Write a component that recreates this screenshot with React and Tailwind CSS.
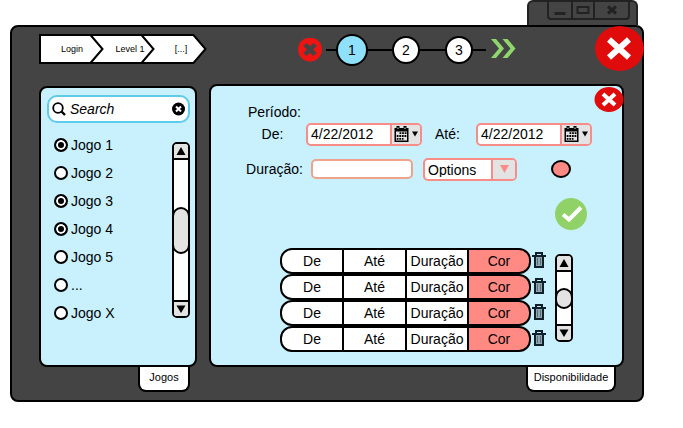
import React from "react";

const games = [
  { name: "Jogo 1", checked: true },
  { name: "Jogo 2", checked: false },
  { name: "Jogo 3", checked: true },
  { name: "Jogo 4", checked: true },
  { name: "Jogo 5", checked: false },
  { name: "...", checked: false },
  { name: "Jogo X", checked: false },
];

const rows = [1, 2, 3, 4];

function WindowControls() {
  return (
    <div className="mr-[6px] h-[25px] w-[111px] rounded-t-md border-2 border-b-0 border-[#222] bg-[#444]">
      <div className="ml-[18px] flex h-[18px] w-[83px] rounded-b border-x-2 border-b-2 border-[#222]">
        <button aria-label="Minimizar" className="flex w-6 items-end justify-center border-r-2 border-[#222]">
          <svg width="12" height="6" viewBox="0 0 12 6">
            <path d="M0.500 1.500H11.500" stroke="#222" strokeWidth="3" />
          </svg>
        </button>
        <button aria-label="Maximizar" className="flex w-[22px] items-center justify-center border-r-2 border-[#222]">
          <svg width="14" height="10" viewBox="0 0 14 10">
            <rect x="1.500" y="2" width="11" height="6" fill="none" stroke="#222" strokeWidth="2" />
          </svg>
        </button>
        <button aria-label="Fechar janela" className="flex flex-1 items-center justify-center">
          <svg width="10" height="10" viewBox="0 0 10 10">
            <path d="M1 1.500L9 8.500M9 1.500L1 8.500" stroke="#222" strokeWidth="3" />
          </svg>
        </button>
      </div>
    </div>
  );
}

function Breadcrumb() {
  return (
    <nav aria-label="Trilha" className="relative h-[30px] w-[168px] shrink-0 self-start text-[9px] leading-[30px]">
      <svg className="absolute inset-0" width="168" height="30" viewBox="0 0 168 30">
        <path
          d="M1 1H154.500L166.500 15L154.500 29H1Z"
          fill="#fff"
          stroke="#000"
          strokeWidth="2"
        />
        <path d="M51.500 1L63.500 15L51.500 29M102.500 1L114.500 15L102.500 29" fill="none" stroke="#000" strokeWidth="2" />
      </svg>
      <ol className="relative flex pl-[10px]">
        <li className="w-[46px] text-center"><a href="#login">Login</a></li>
        <li className="w-[70px] text-center"><a href="#level-1">Level 1</a></li>
        <li className="w-8 text-center"><a href="#more">[...]</a></li>
      </ol>
    </nav>
  );
}

function Stepper() {
  return (
    <div className="ml-[91px] flex items-center">
      <button aria-label="Cancelar" className="mr-1">
        <svg width="24" height="24" viewBox="0 0 24 24">
          <circle cx="12" cy="11.500" r="12" fill="#ee1411" />
          <path d="M7 6.500L17 16.500M17 6.500L7 16.500" stroke="#444" strokeWidth="4.500" />
        </svg>
      </button>
      <span className="h-[2px] w-[10px] bg-black" />
      <button className="size-8 rounded-full border-2 border-black bg-[#8fe0fa]">1</button>
      <span className="h-[2px] w-6 bg-black" />
      <button className="size-7 rounded-full border-2 border-black bg-white">2</button>
      <span className="h-[2px] w-[25px] bg-black" />
      <button className="size-7 rounded-full border-2 border-black bg-white">3</button>
      <span className="h-[2px] w-[13px] bg-black" />
      <button aria-label="Avançar" className="mb-[2px] ml-[5px]">
        <svg width="25" height="20" viewBox="0 0 25 20">
          <path
            d="M0 0H5L13 9.500L5 19H0L8 9.500ZM11.500 0H16.500L24.500 9.500L16.500 19H11.500L19.500 9.500Z"
            fill="#8fd66c"
          />
        </svg>
      </button>
    </div>
  );
}

function ScrollBar({ className, thumbClass }) {
  return (
    <div className={"flex w-[18px] shrink-0 flex-col rounded-[5px] border-2 border-black bg-white " + className}>
      <button aria-label="Rolar para cima" className="flex h-4 shrink-0 items-center justify-center rounded-t-[3px] border-b-2 border-black bg-[#e3e3e3]">
        <svg width="10" height="8" viewBox="0 0 10 8">
          <path d="M5 0L9.500 8H0.500Z" />
        </svg>
      </button>
      <div className="flex-1">
        <div className={"-mx-[2px] rounded-full border-2 border-black bg-[#e3e3e3] " + thumbClass} />
      </div>
      <button aria-label="Rolar para baixo" className="flex h-4 shrink-0 items-center justify-center rounded-b-[3px] border-t-2 border-black bg-[#e3e3e3]">
        <svg width="10" height="8" viewBox="0 0 10 8">
          <path d="M0.500 0.500H9.500L5 8Z" />
        </svg>
      </button>
    </div>
  );
}

function PanelTab({ className, children }) {
  return (
    <button className={"h-[25px] self-end rounded-b-lg border-2 border-t-0 border-black bg-white pb-1 text-[11px] leading-4 " + className}>
      {children}
    </button>
  );
}

function GamesPanel() {
  return (
    <section className="mt-[2px] flex w-[158px] shrink-0 flex-col">
      <div className="rounded-lg border-2 border-black bg-[#c8f0fd] pt-[7px] pr-[5px] pb-[38px] pl-[6px]">
        <div className="flex h-7 items-center rounded-[10px] border-2 border-[#5ecbeb] bg-white px-[3px]">
          <svg className="shrink-0" width="14" height="14" viewBox="0 0 14 14">
            <circle cx="6" cy="6" r="4.800" fill="none" stroke="#000" strokeWidth="1.800" />
            <path d="M9.500 9.500L13 13" stroke="#000" strokeWidth="2.400" />
          </svg>
          <input
            aria-label="Search"
            placeholder="Search"
            className="min-w-0 flex-1 pl-1 text-sm italic outline-none placeholder:text-black"
          />
          <button aria-label="Limpar">
            <svg width="14" height="14" viewBox="0 0 14 14">
              <circle cx="7.500" cy="7" r="6.500" />
              <path d="M5 4.500L10 9.500M10 4.500L5 9.500" stroke="#fff" strokeWidth="2" />
            </svg>
          </button>
        </div>
        <div className="mt-2 flex justify-between pl-[7px]">
          <ul>
            {games.map((g) => (
              <li key={g.name}>
                <label className="flex h-7 items-center gap-[3px]">
                  <input
                    type="radio"
                    defaultChecked={g.checked}
                    className="size-[14px] appearance-none rounded-full border-2 border-black bg-white checked:bg-black checked:shadow-[inset_0_0_0_2px_white]"
                  />
                  <span>{g.name}</span>
                </label>
              </li>
            ))}
          </ul>
          <ScrollBar className="mt-[11px] h-[176px]" thumbClass="mt-[47px] h-[47px]" />
        </div>
      </div>
      <PanelTab className="mr-[7px] w-[52px]">Jogos</PanelTab>
    </section>
  );
}

function DateField({ id }) {
  return (
    <div className="flex h-[23px] w-[116px] overflow-hidden rounded-[5px] border-2 border-[#f88c88] bg-white">
      <input id={id} defaultValue="4/22/2012" className="min-w-0 flex-1 pl-[3px] outline-none" />
      <button aria-label="Abrir calendário" className="flex w-[30px] items-center justify-center gap-[3px] border-l-2 border-[#f88c88] bg-[#e3e3e3]">
        <svg width="15" height="16" viewBox="0 0 15 16">
          <path d="M0.500 2H14.500V16H0.500Z" />
          <path d="M2.500 0H5.500V4H2.500ZM9.500 0H12.500V4H9.500Z" />
          <path d="M3.500 1.500H4.500V3H3.500ZM10.500 1.500H11.500V3H10.500Z" fill="#e3e3e3" />
          <path d="M2 5.500H13V14.500H2Z" fill="#e3e3e3" />
          <path
            d="M5.500 7.200H12.500M2.700 10H12.500M2.700 12.800H9.500"
            stroke="#000"
            strokeWidth="1.800"
            strokeDasharray="1.800 0.800"
          />
        </svg>
        <svg width="6" height="6" viewBox="0 0 6 6">
          <path d="M0 0.500H6L3 5.500Z" />
        </svg>
      </button>
    </div>
  );
}

function TrashIcon() {
  return (
    <svg width="14" height="16" viewBox="0 0 14 16">
      <path d="M4 3V1H10V3M0 4H14" fill="none" stroke="#10202a" strokeWidth="2" />
      <path d="M3 5V15H11V5" fill="#8fa7b0" stroke="#10202a" strokeWidth="2" />
      <path d="M5.500 6V13M8.500 6V13" stroke="#5b6d75" />
    </svg>
  );
}

function AvailabilityPanel() {
  const cell = "h-[26px] border-y-2 border-r-2 border-black p-0 text-center leading-[22px]";
  return (
    <section className="flex min-w-0 flex-1 flex-col">
      <div className="relative rounded-lg border-2 border-black bg-[#c8f0fd] pt-4 pb-[13px] pl-[35px]">
        <button aria-label="Fechar painel" className="absolute top-0 -right-[2px]">
          <svg width="30" height="26" viewBox="0 0 30 26">
            <ellipse cx="15" cy="13.500" rx="14.500" ry="12.500" fill="#e00b0b" />
            <path d="M9 8L21 19M21 8L9 19" stroke="#fff" strokeWidth="4" />
          </svg>
        </button>
        <p className="w-[57px] text-center">Período:</p>
        <div className="flex h-6 items-center">
          <label htmlFor="from" className="w-[57px] pr-1 text-center">De:</label>
          <div className="ml-[3px]"><DateField id="from" /></div>
          <label htmlFor="to" className="ml-[13px] w-[41px]">Até:</label>
          <DateField id="to" />
        </div>
        <div className="mt-[11px] flex h-6 items-center">
          <label htmlFor="duration" className="w-[57px] text-center">Duração:</label>
          <input id="duration" className="ml-2 h-5 w-[102px] rounded-[5px] border-2 border-[#efa38c] bg-white px-1 outline-none" />
          <div className="ml-[10px] flex h-[23px] w-[94px] overflow-hidden rounded-[5px] border-2 border-[#f88c88] bg-white">
            <select aria-label="Options" className="min-w-0 flex-1 appearance-none pb-[2px] pl-[3px] outline-none">
              <option>Options</option>
            </select>
            <span className="flex w-6 items-center justify-center border-l-2 border-[#f88c88] bg-[#e3e3e3]">
              <svg width="9" height="8" viewBox="0 0 9 8">
                <path d="M0 0H9L4.500 8Z" fill="#f88c88" />
              </svg>
            </span>
          </div>
          <button aria-label="Escolher cor" className="ml-[34px] h-[18px] w-5 rounded-[50%] border-2 border-black bg-[#ff8a84]" />
        </div>
        <button aria-label="Confirmar" className="mt-[17px] ml-[309px] block">
          <svg width="32" height="32" viewBox="0 0 32 32">
            <circle cx="16" cy="16" r="16" fill="#90d267" />
            <path d="M8 16.500L14 21.500L26 9.500" fill="none" stroke="#fff" strokeWidth="4" />
          </svg>
        </button>
        <div className="mt-[18px] ml-[34px] flex items-start">
          <table className="w-[267px] table-fixed border-separate border-spacing-0">
            <tbody>
              {rows.map((r) => (
                <tr key={r}>
                  <td className={cell + " w-16 rounded-l-[12px] border-l-2 bg-white"}>De</td>
                  <td className={cell + " w-[63px] bg-white"}>Até</td>
                  <td className={cell + " w-[62px] bg-white"}>Duração</td>
                  <td className={cell + " w-[62px] rounded-r-[12px] bg-[#ff8a84]"}>Cor</td>
                  <td className="w-4 p-0 pt-1 align-top">
                    <button aria-label="Excluir" className="ml-[1px] block">
                      <TrashIcon />
                    </button>
                  </td>
                </tr>
              ))}
            </tbody>
          </table>
          <ScrollBar className="mt-[6px] ml-2 h-[88px]" thumbClass="mt-4 h-[21px]" />
        </div>
      </div>
      <PanelTab className="mr-2 w-[90px]">Disponibilidade</PanelTab>
    </section>
  );
}

export default function App() {
  return (
    <main className="min-h-screen bg-white pr-[39px] pl-[10px] font-['Liberation_Sans',Arial,sans-serif] text-sm text-black">
      <div className="flex justify-end">
        <WindowControls />
      </div>
      <div className="relative rounded-lg border-2 border-black bg-[#444] pt-[7px] pr-[18px] pb-2 pl-[27px]">
        <button aria-label="Fechar" className="absolute -top-[1px] -right-[2px]">
          <svg width="49" height="46" viewBox="0 0 49 46">
            <ellipse cx="24.500" cy="22.500" rx="24.500" ry="22.500" fill="#e00b0b" />
            <path d="M14 13.500L34 31.500M34 13.500L14 31.500" stroke="#fff" strokeWidth="6" />
          </svg>
        </button>
        <header className="mb-[18px] flex h-8 items-center">
          <Breadcrumb />
          <Stepper />
        </header>
        <div className="flex items-start gap-3">
          <GamesPanel />
          <AvailabilityPanel />
        </div>
      </div>
    </main>
  );
}
